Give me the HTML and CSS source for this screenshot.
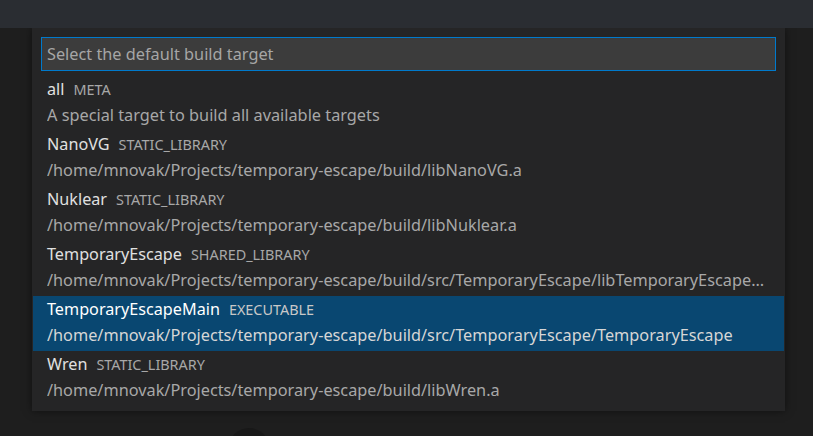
FILE: index.html
```html
<!DOCTYPE html>
<html>
<head>
<meta charset="utf-8">
<link rel="stylesheet" href="styles.css">
</head>
<body>
<div class="titlebar"></div>
<div class="workbench">
  <div class="quick-pick">
    <div class="input-box"><span class="placeholder">Select the default build target</span></div>
    <div class="list">
      <div class="item">
        <div class="label-row"><span class="label">all</span><span class="detail">META</span></div>
        <div class="desc">A special target to build all available targets</div>
      </div>
      <div class="item">
        <div class="label-row"><span class="label">NanoVG</span><span class="detail">STATIC_LIBRARY</span></div>
        <div class="desc">/home/mnovak/Projects/temporary-escape/build/libNanoVG.a</div>
      </div>
      <div class="item">
        <div class="label-row"><span class="label">Nuklear</span><span class="detail">STATIC_LIBRARY</span></div>
        <div class="desc">/home/mnovak/Projects/temporary-escape/build/libNuklear.a</div>
      </div>
      <div class="item">
        <div class="label-row"><span class="label">TemporaryEscape</span><span class="detail">SHARED_LIBRARY</span></div>
        <div class="desc">/home/mnovak/Projects/temporary-escape/build/src/TemporaryEscape/libTemporaryEscape.so</div>
      </div>
      <div class="item selected">
        <div class="label-row"><span class="label">TemporaryEscapeMain</span><span class="detail">EXECUTABLE</span></div>
        <div class="desc">/home/mnovak/Projects/temporary-escape/build/src/TemporaryEscape/TemporaryEscape</div>
      </div>
      <div class="item">
        <div class="label-row"><span class="label">Wren</span><span class="detail">STATIC_LIBRARY</span></div>
        <div class="desc">/home/mnovak/Projects/temporary-escape/build/libWren.a</div>
      </div>
    </div>
  </div>
  <div class="blob"></div>
</div>
</body>
</html>
```
FILE: styles.css
```css
html, body {
  margin: 0;
  padding: 0;
  width: 813px;
  height: 436px;
  overflow: hidden;
  background: #1e1e1e;
  font-family: "Noto Sans", "Open Sans", sans-serif;
}
.titlebar {
  height: 28px;
  background: #2a2d32;
}
.workbench {
  position: relative;
  height: 408px;
  padding-left: 32px;
  overflow: hidden;
}
.quick-pick {
  width: 753px;
  background: #252526;
  box-shadow: 0 0 8px rgba(0,0,0,0.5);
  padding: 9px 0 5px 0;
  box-sizing: border-box;
}
.input-box {
  margin: 0 9px;
  height: 34px;
  box-sizing: border-box;
  border: 1px solid #007acc;
  background: #3c3c3c;
  display: flex;
  align-items: center;
  padding-left: 5px;
}
.placeholder {
  color: #a6a6a6;
  font-size: 16.3px;
}
.list {
  margin-top: 5px;
  padding: 0 1px;
}
.item {
  height: 55px;
  padding-left: 14px;
  padding-right: 17px;
  box-sizing: border-box;
  overflow: hidden;
}
.item.selected {
  background: #094771;
}
.label-row {
  height: 26px;
  display: flex;
  align-items: center;
  white-space: nowrap;
}
.label {
  color: #e0e0e0;
  font-size: 16.2px;
}
.detail {
  color: #a8a8a8;
  font-size: 14.4px;
  margin-left: 9px;
}
.desc {
  height: 26px;
  line-height: 26px;
  font-size: 16.3px;
  color: #a8a8a8;
  white-space: nowrap;
  overflow: hidden;
  text-overflow: ellipsis;
}
.selected .label { color: #ffffff; }
.selected .detail { color: #c8c8c8; }
.selected .desc { color: #d6d6d6; }
.blob {
  position: absolute;
  left: 229px;
  top: 400px;
  width: 40px;
  height: 40px;
  border-radius: 50%;
  background: #181818;
}
```
